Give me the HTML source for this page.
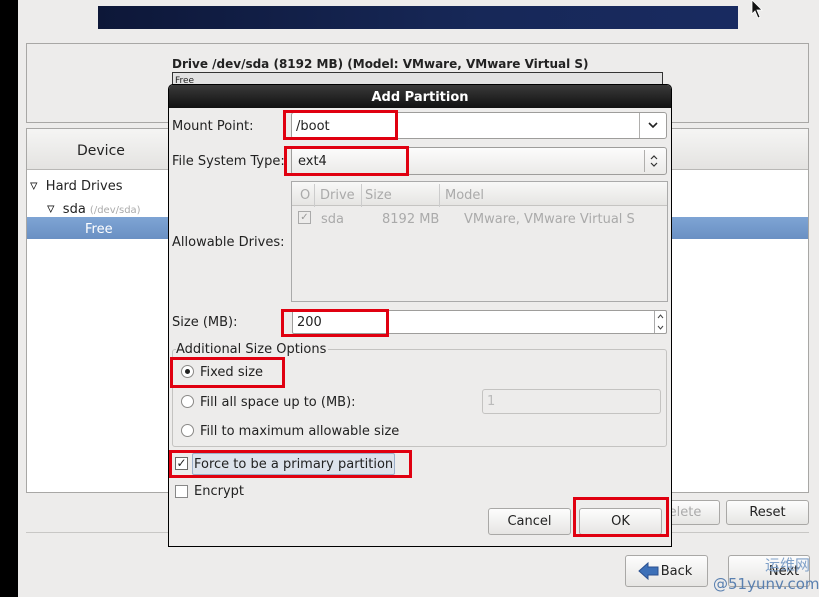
<!DOCTYPE html>
<html><head><meta charset="utf-8"><style>
*{margin:0;padding:0;box-sizing:border-box}
body{width:819px;height:597px;overflow:hidden;background:#edeceb;font-family:"DejaVu Sans","Liberation Sans",sans-serif;font-size:13px;color:#222;position:relative}
.a{position:absolute}
.btn{position:absolute;border:1px solid #a9a8a6;border-radius:3px;background:linear-gradient(#fdfdfd,#e6e5e3);text-align:center;font-size:13px;line-height:26px}
.red{position:absolute;border:3px solid #e00010}
.in{position:absolute;background:#fff;border:1px solid #9e9d9b;border-radius:3px}
.t{position:absolute;white-space:nowrap;transform:translateY(2px)}
.radio{position:absolute;width:13px;height:13px;border:1px solid #8a8987;border-radius:50%;background:#fff}
.chk{position:absolute;width:13px;height:13px;border:1px solid #6a6967;background:#fff}
</style></head><body>
<div class="a" style="left:0;top:0;width:18px;height:597px;background:#000"></div>
<div class="a" style="left:98px;top:6px;width:640px;height:23px;background:linear-gradient(90deg,#0d1738,#172858 60%,#182a60)"></div>
<svg class="a" style="left:750px;top:0" width="16" height="20"><path d="M2 0 L2 14 L5 11 L8 18 L10 17 L7 10 L12 10 Z" fill="#111" stroke="#fff" stroke-width="0.8"/></svg>
<div class="a" style="left:26px;top:43px;width:783px;height:80px;border:1px solid #a8a7a5"></div>
<div class="t" style="left:172px;top:55px;font-weight:bold;font-size:12px">Drive /dev/sda (8192 MB) (Model: VMware, VMware Virtual S)</div>
<div class="a" style="left:172px;top:72px;width:491px;height:20px;border:1px solid #333;background:#e2e2e2;font-size:9px;padding-left:2px;padding-top:3px">Free</div>
<div class="a" style="left:26px;top:128px;width:783px;height:365px;border:1px solid #a8a7a5;background:#fff"></div>
<div class="a" style="left:27px;top:129px;width:781px;height:41px;background:linear-gradient(#f5f5f4,#e4e3e1);border-bottom:1px solid #b9b8b6"></div>
<div class="t" style="left:77px;top:141px;font-size:14px">Device</div>
<div class="t" style="left:30px;top:174px;font-size:13px"><span style="font-size:15px">▿</span>&nbsp; Hard Drives</div>
<div class="t" style="left:47px;top:197px;font-size:13px"><span style="font-size:15px">▿</span>&nbsp; sda <span style="color:#aaa;font-size:10px">(/dev/sda)</span></div>
<div class="a" style="left:27px;top:217px;width:781px;height:22px;background:linear-gradient(#7ea4d4,#6a90c3)"></div>
<div class="t" style="left:85px;top:220px;color:#fff">Free</div>
<div class="btn" style="left:640px;top:500px;width:80px;height:25px;color:#aaa;line-height:24px">Delete</div>
<div class="btn" style="left:726px;top:500px;width:83px;height:25px;line-height:24px">Reset</div>
<div class="a" style="left:26px;top:532px;width:783px;height:1px;background:#c8c7c5"></div>
<div class="btn" style="left:625px;top:555px;width:83px;height:32px;line-height:32px;padding-left:20px">Back</div>
<svg class="a" style="left:638px;top:561px" width="22" height="20"><path d="M1 10 L10 2 L10 6 L20 6 L20 14 L10 14 L10 18 Z" fill="#3d70b8" stroke="#2a5090"/></svg>
<div class="btn" style="left:728px;top:555px;width:82px;height:32px;line-height:32px;padding-left:30px">Next</div>
<div class="t" style="left:765px;top:552px;color:#7fa0c8;font-size:15px;font-family:'Noto Sans CJK SC',sans-serif">运维网</div>
<div class="t" style="left:713px;top:573px;color:#5a80b0;font-size:15px">@51yunv.com</div>

<!-- dialog -->
<div class="a" style="left:168px;top:84px;width:504px;height:463px;border:1px solid #000;background:#edeceb;border-radius:5px 5px 0 0"></div>
<div class="a" style="left:169px;top:85px;width:502px;height:23px;background:linear-gradient(#3a3a3a,#111);border-radius:4px 4px 0 0;color:#fff;font-weight:bold;text-align:center;line-height:25px;font-size:13px">Add Partition</div>
<div class="t" style="left:172px;top:117px">Mount Point:</div>
<div class="in" style="left:291px;top:112px;width:376px;height:27px;padding:6px 4px">/boot</div>
<div class="a" style="left:639px;top:113px;width:1px;height:25px;background:#b0afad"></div>
<svg class="a" style="left:647px;top:120px" width="12" height="10"><path d="M2 3 L6 7 L10 3" fill="none" stroke="#222" stroke-width="1.6"/></svg>
<div class="t" style="left:172px;top:152px">File System Type:</div>
<div class="in" style="left:291px;top:147px;width:376px;height:28px;padding:6px 6px;background:linear-gradient(#fcfcfc,#ebeae8)">ext4</div>
<div class="a" style="left:644px;top:150px;width:1px;height:22px;background:#b0afad"></div>
<svg class="a" style="left:649px;top:153px" width="10" height="16"><path d="M2 6 L5 3 L8 6 M2 10 L5 13 L8 10" fill="none" stroke="#333" stroke-width="1.2"/></svg>
<div class="a" style="left:291px;top:181px;width:377px;height:121px;border:1px solid #aaa;background:#edeceb"></div>
<div class="a" style="left:292px;top:182px;width:375px;height:24px;background:linear-gradient(#f8f8f7,#e6e5e3);border-bottom:1px solid #c5c4c2;color:#aaa;line-height:23px">
<span class="t" style="left:8px">O</span><span class="t" style="left:22px;border-left:1px solid #ccc;padding-left:5px">Drive</span><span class="t" style="left:69px;border-left:1px solid #ccc;padding-left:3px">Size</span><span class="t" style="left:147px;border-left:1px solid #ccc;padding-left:5px">Model</span></div>
<div class="chk" style="left:298px;top:211px;border-color:#aaa;background:#edeceb;font-size:10px;line-height:11px;color:#999;text-align:center">✓</div>
<div class="t" style="left:321px;top:210px;color:#aaa">sda</div>
<div class="t" style="left:382px;top:210px;color:#aaa">8192 MB</div>
<div class="t" style="left:464px;top:210px;color:#aaa">VMware, VMware Virtual S</div>
<div class="t" style="left:172px;top:233px">Allowable Drives:</div>
<div class="t" style="left:172px;top:313px">Size (MB):</div>
<div class="in" style="left:292px;top:310px;width:375px;height:24px;padding:4px 4px;border-radius:2px">200</div>
<div class="a" style="left:654px;top:311px;width:1px;height:22px;background:#aaa"></div>
<svg class="a" style="left:655px;top:311px" width="11" height="22"><path d="M3 7 L5.5 4 L8 7 M3 15 L5.5 18 L8 15" fill="none" stroke="#444" stroke-width="1"/></svg>
<div class="a" style="left:172px;top:349px;width:495px;height:98px;border:1px solid #c4c3c1;border-radius:3px"></div>
<div class="t" style="left:176px;top:340px;background:#edeceb;padding-right:2px">Additional Size Options</div>
<div class="radio" style="left:181px;top:365px"><div class="a" style="left:3px;top:3px;width:5px;height:5px;border-radius:50%;background:#222"></div></div>
<div class="t" style="left:200px;top:363px">Fixed size</div>
<div class="radio" style="left:181px;top:395px"></div>
<div class="t" style="left:200px;top:393px">Fill all space up to (MB):</div>
<div class="a" style="left:482px;top:389px;width:179px;height:25px;border:1px solid #c4c3c1;border-radius:3px;color:#bbb;padding:4px 4px">1</div>
<div class="radio" style="left:181px;top:424px"></div>
<div class="t" style="left:200px;top:422px">Fill to maximum allowable size</div>
<div class="chk" style="left:175px;top:457px;font-size:12px;line-height:11px;text-align:center">✓</div>
<div class="a" style="left:192px;top:453px;width:203px;height:22px;background:#dde3ec;border:1px solid #9db0ca;border-radius:2px"></div>
<div class="t" style="left:194px;top:455px">Force to be a primary partition</div>
<div class="chk" style="left:175px;top:485px;border-color:#888"></div>
<div class="t" style="left:194px;top:482px">Encrypt</div>
<div class="btn" style="left:488px;top:508px;width:83px;height:27px">Cancel</div>
<div class="btn" style="left:579px;top:508px;width:83px;height:27px">OK</div>

<div class="red" style="left:283px;top:110px;width:115px;height:30px"></div>
<div class="red" style="left:284px;top:146px;width:125px;height:30px"></div>
<div class="red" style="left:281px;top:309px;width:108px;height:28px"></div>
<div class="red" style="left:170px;top:357px;width:115px;height:31px"></div>
<div class="red" style="left:169px;top:450px;width:243px;height:28px"></div>
<div class="red" style="left:573px;top:497px;width:96px;height:40px"></div>
</body></html>
